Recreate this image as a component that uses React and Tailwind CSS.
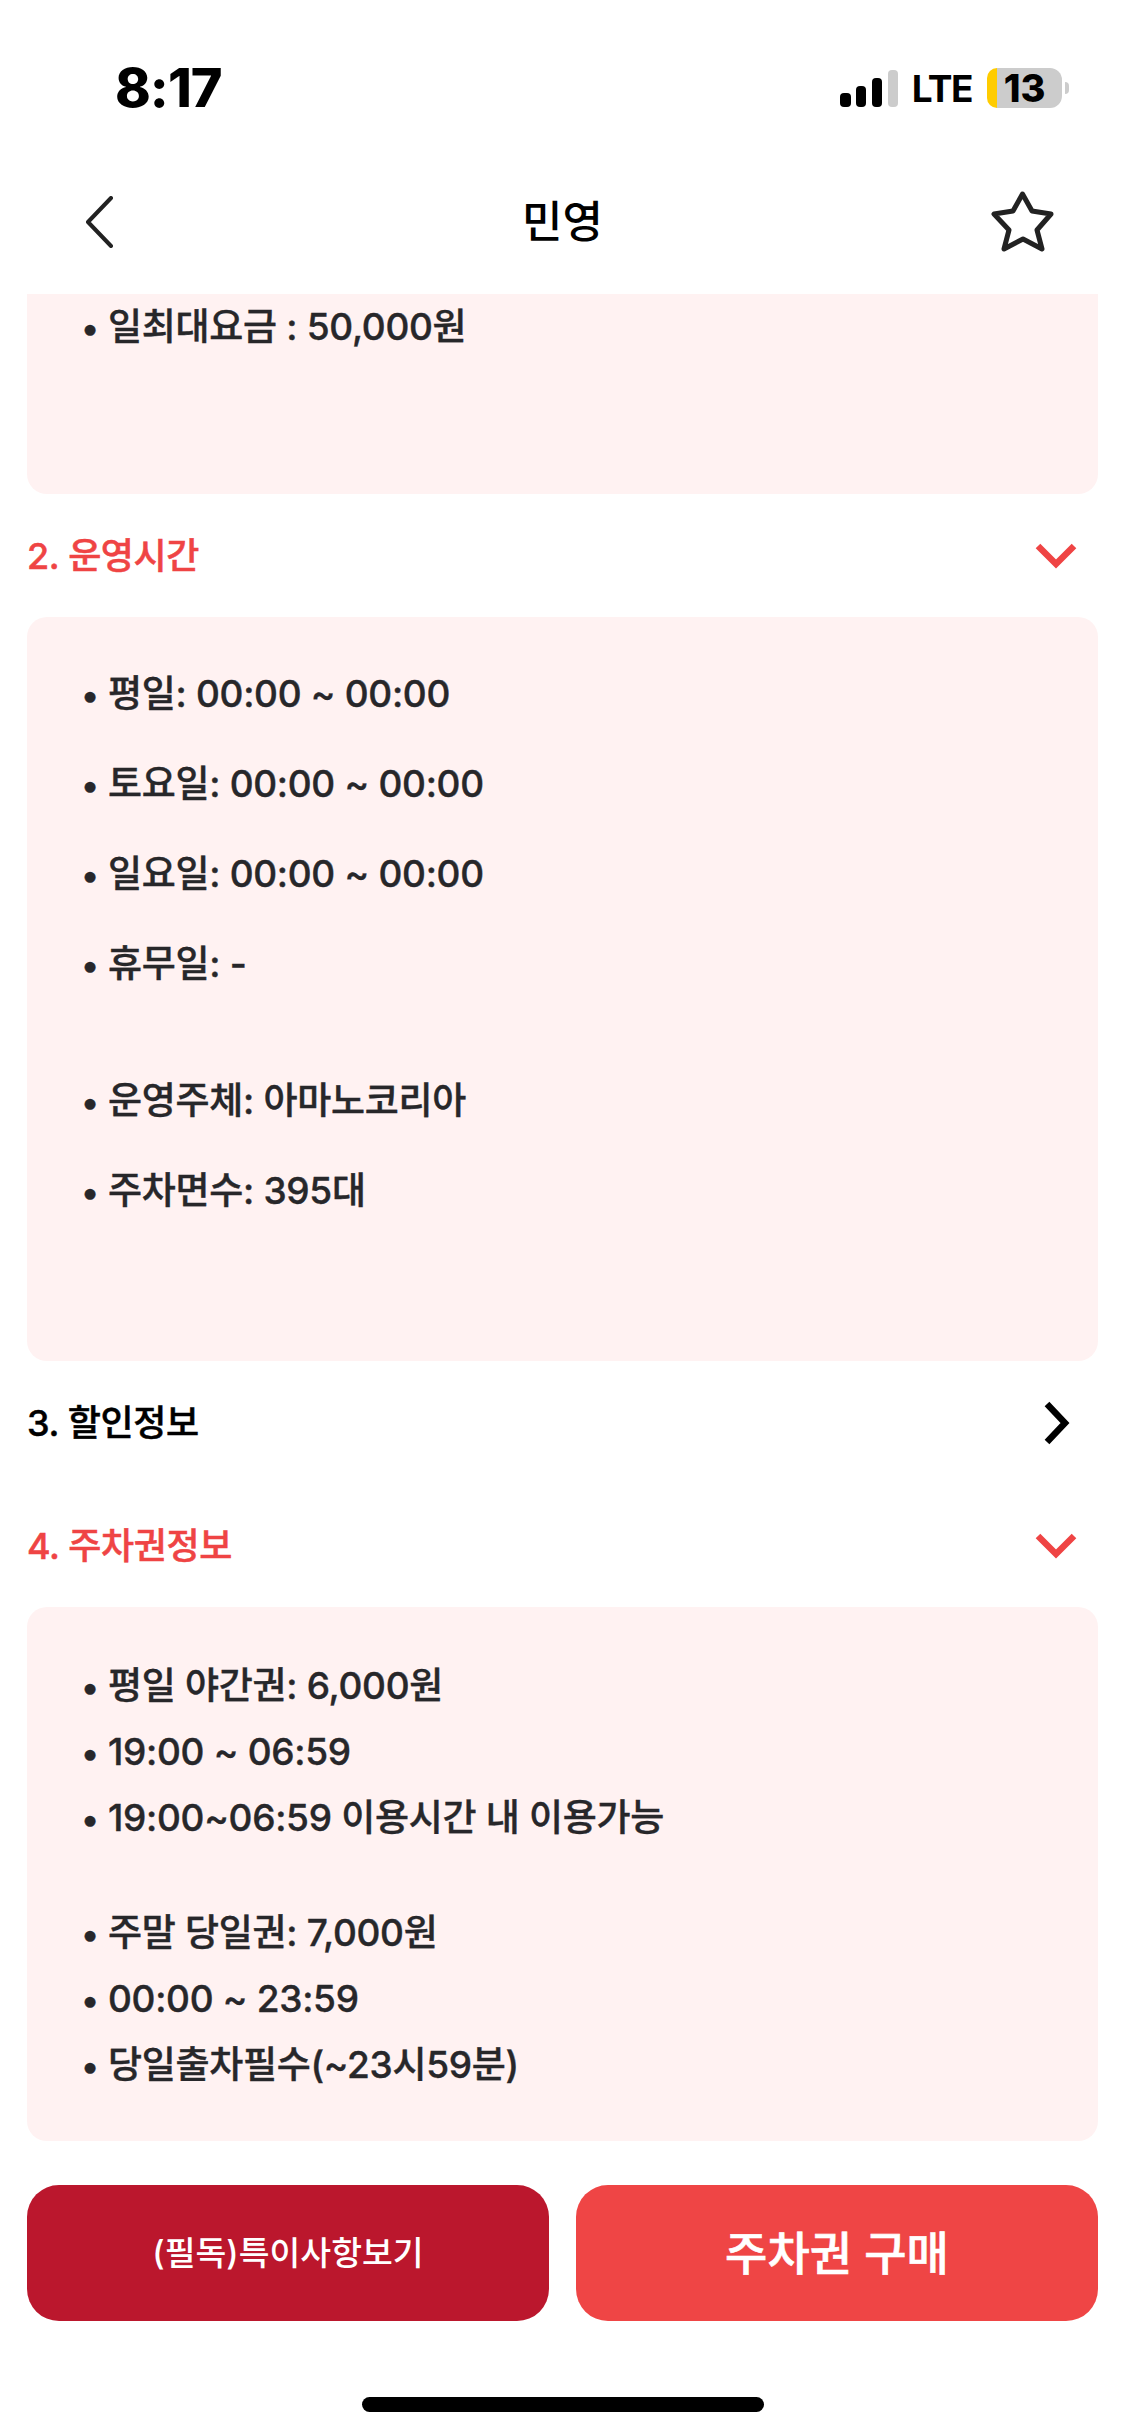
import React from "react";

function Bullet({ children }) {
  return (
    <div className="flex items-center h-[54px] text-[37px] font-medium tracking-[-0.3px] text-[#27272a] whitespace-nowrap [-webkit-text-stroke:0.4px_#27272a]">
      <span className="w-[27px] text-[34px]">•</span>
      <span>{children}</span>
    </div>
  );
}

function ChevronDown() {
  return (
    <svg width="44" height="28" viewBox="0 0 44 28" fill="none">
      <path d="M4 4 L22 22 L40 4" stroke="#ef4444" strokeWidth="6.5" />
    </svg>
  );
}

function ChevronRight() {
  return (
    <svg width="28" height="44" viewBox="0 0 28 44" fill="none">
      <path d="M5 3 L23 22 L5 41" stroke="#000" strokeWidth="6.5" />
    </svg>
  );
}

function SectionHeader({ title, open }) {
  return (
    <div className="flex items-center justify-between h-[123px]">
      <span className={`text-[36px] font-medium tracking-[-0.4px] [-webkit-text-stroke:0.5px] ${open ? "text-[#ef4444]" : "text-black"}`}>
        {title}
      </span>
      <span className="flex w-[84px] justify-center">
        {open ? <ChevronDown /> : <ChevronRight />}
      </span>
    </div>
  );
}

function StatusBar() {
  return (
    <div className="flex items-center justify-between h-[176px] pl-[115px] pr-[56px]">
      <span className="text-[54px] font-extrabold text-black leading-none tracking-[-1px]">8:17</span>
      <div className="flex items-center">
        <svg width="58" height="37" viewBox="0 0 58 37">
          <rect x="0" y="23" width="11" height="14" rx="4" fill="#000" />
          <rect x="16" y="16" width="10" height="21" rx="4" fill="#000" />
          <rect x="32" y="8" width="10" height="29" rx="4" fill="#000" />
          <rect x="48" y="0" width="10" height="37" rx="4" fill="#ccc" />
        </svg>
        <span className="ml-[14px] text-[37px] font-bold text-black leading-none tracking-[-1.5px]">LTE</span>
        <div className="ml-[15px] flex h-[40px] w-[75px]">
          <span className="w-[10px] rounded-l-[12px] bg-[#ffcc00]" />
          <span className="flex-1 rounded-r-[12px] bg-[#ccc] text-center text-[38px] font-extrabold leading-[40px] text-black pr-[10px]">13</span>
        </div>
        <span className="ml-[3px] h-[12px] w-[4px] rounded-r-full bg-[#ccc]" />
      </div>
    </div>
  );
}

function NavBar() {
  return (
    <div className="grid grid-cols-[1fr_auto_1fr] items-center h-[118px] pl-[84px] pr-[70px] pb-[26px]">
      <svg width="30" height="52" viewBox="0 0 30 52" fill="none">
        <path d="M27 2 L4 26 L27 50" stroke="#222" strokeWidth="4" strokeLinecap="round" strokeLinejoin="round" />
      </svg>
      <span className="text-[44px] font-medium text-black leading-none -translate-x-[7px]">민영</span>
      <svg className="justify-self-end" width="64" height="62" viewBox="0 0 64 62" fill="none">
        <path
          d="M31.5 3 L41 20 L60 23 L46 39 L51 58 L32 48 L13 58 L18 39 L3 23 L22 20 Z"
          stroke="#222"
          strokeWidth="5"
          strokeLinejoin="round"
        />
      </svg>
    </div>
  );
}

export default function App() {
  return (
    <div
      className="flex h-[2436px] w-[1125px] flex-col overflow-hidden bg-white"
      style={{ fontFamily: 'Inter, "Noto Sans CJK KR", sans-serif' }}
    >
      <StatusBar />
      <NavBar />

      <div className="flex-1 overflow-hidden px-[27px]">
        {/* 1. 요금정보 (scrolled) */}
        <div className="h-[200px] rounded-b-[20px] bg-[#fff2f2] pl-[54px] pt-[6px]">
          <Bullet>일최대요금 : 50,000원</Bullet>
        </div>

        <SectionHeader title="2. 운영시간" open />
        <div className="h-[744px] rounded-[20px] bg-[#fff2f2] pl-[54px] pt-[50px]">
          <div className="flex flex-col gap-[36px]">
            <Bullet>평일: 00:00 ~ 00:00</Bullet>
            <Bullet>토요일: 00:00 ~ 00:00</Bullet>
            <Bullet>일요일: 00:00 ~ 00:00</Bullet>
            <Bullet>휴무일: -</Bullet>
          </div>
          <div className="mt-[83px] flex flex-col gap-[36px]">
            <Bullet>운영주체: 아마노코리아</Bullet>
            <Bullet>주차면수: 395대</Bullet>
          </div>
        </div>

        <SectionHeader title="3. 할인정보" />
        <SectionHeader title="4. 주차권정보" open />
        <div className="h-[534px] rounded-[20px] bg-[#fff2f2] pl-[54px] pt-[52px]">
          <div className="flex flex-col gap-[12px]">
            <Bullet>평일 야간권: 6,000원</Bullet>
            <Bullet>19:00 ~ 06:59</Bullet>
            <Bullet>19:00~06:59 이용시간 내 이용가능</Bullet>
          </div>
          <div className="mt-[61px] flex flex-col gap-[12px]">
            <Bullet>주말 당일권: 7,000원</Bullet>
            <Bullet>00:00 ~ 23:59</Bullet>
            <Bullet>당일출차필수(~23시59분)</Bullet>
          </div>
        </div>

        {/* 하단 버튼 */}
        <div className="mt-[44px] flex gap-[27px]">
          <button className="h-[136px] flex-1 rounded-[32px] bg-[#bb172d] text-[33.5px] font-medium text-white">
            (필독)특이사항보기
          </button>
          <button className="h-[136px] flex-1 rounded-[32px] bg-[#ef4545] text-[46px] font-medium text-white [-webkit-text-stroke:0.6px_#ffffff]">
            주차권 구매
          </button>
        </div>
      </div>

      <div className="flex h-[115px] justify-center pt-[76px]">
        <div className="h-[15px] w-[402px] rounded-full bg-black" />
      </div>
    </div>
  );
}
